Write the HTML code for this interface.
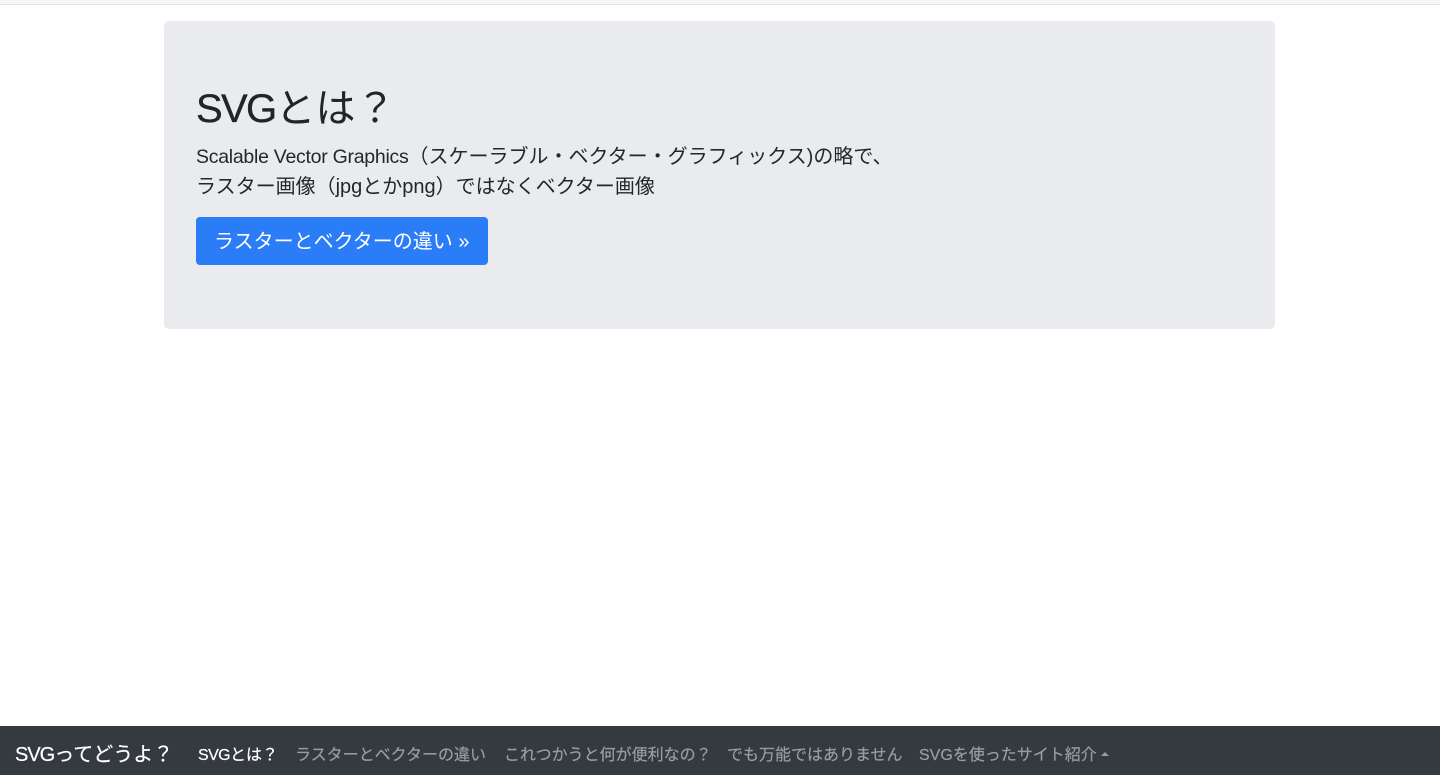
<!DOCTYPE html>
<html lang="ja">
<head>
<meta charset="utf-8">
<title>SVGってどうよ？</title>
<style>
*{box-sizing:border-box}
html,body{margin:0;padding:0;width:1440px;height:775px;overflow:hidden;background:#fff}
body{position:relative;font-family:"Liberation Sans","Noto Sans CJK JP",sans-serif;color:#212529}
.top{position:absolute;left:0;top:0;width:1440px;height:5px;background:#f6f6f6;border-bottom:1px solid #e2e2e2}
.jumbo{position:absolute;left:164px;top:21px;width:1111px;height:308px;background:#eaebef;border-radius:5px}
.abs{position:absolute;white-space:nowrap;margin:0}
h1{left:196px;top:83px;font-size:40px;line-height:52px;font-weight:400}
h1 b{font-weight:400;letter-spacing:-1.65px;-webkit-text-stroke:.35px #212529}
.lead{left:196px;font-size:20px;line-height:30px;font-weight:400;color:#24272a}
.lead i{font-style:normal;font-size:19.5px;letter-spacing:-.27px}
.btn{position:absolute;left:196px;top:217px;width:292px;height:48px;background:#2a7cf7;color:#fff;border-radius:4px;font-size:20px;line-height:50px;padding-left:18px;white-space:nowrap}
nav{position:absolute;left:0;top:726px;width:1440px;height:49px;background:#343a40}
nav span{position:absolute;white-space:nowrap;font-size:16px;line-height:24px;top:18px;color:#9a9da0;-webkit-text-stroke:.2px currentColor}
nav span i{font-style:normal;letter-spacing:-.6px}
nav .brand{left:15px;top:14px;font-size:20px;line-height:30px;color:#fff}
nav .brand i{letter-spacing:-1px}
nav .on{color:#fff}
.caret{position:absolute;left:1101px;top:752px;width:0;height:0;border-left:4.5px solid transparent;border-right:4.5px solid transparent;border-bottom:4.5px solid #9a9da0}
</style>
</head>
<body>
<div class="top"></div>
<div class="jumbo"></div>
<h1 class="abs"><b>SVG</b>とは？</h1>
<p class="abs lead" style="top:142px"><i>Scalable Vector Graphics</i>（スケーラブル・ベクター・グラフィックス)の略で、</p>
<p class="abs lead" style="top:172px">ラスター画像（jpgとかpng）ではなくベクター画像</p>
<a class="btn">ラスターとベクターの違い »</a>
<nav>
<span class="brand"><i>SVG</i>ってどうよ？</span>
<span class="on" style="left:198px"><i>SVG</i>とは？</span>
<span style="left:295px">ラスターとベクターの違い</span>
<span style="left:504px">これつかうと何が便利なの？</span>
<span style="left:727px">でも万能ではありません</span>
<span style="left:919px">SVGを使ったサイト紹介</span>
</nav>
<div class="caret"></div>
</body>
</html>
